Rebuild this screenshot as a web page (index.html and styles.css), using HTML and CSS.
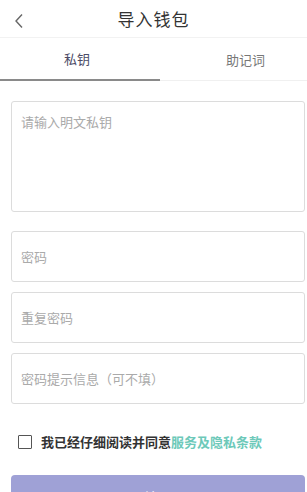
FILE: index.html
```html
<!DOCTYPE html>
<html>
<head>
    <title>导入钱包</title>
<link rel="stylesheet" href="styles.css">
</head>
<body>
    <div class="header">
        <span class="back">
            <svg width="10" height="16" viewBox="0 0 10 16"><path d="M8 1.5 L2 8 L8 14.5" fill="none" stroke="#666" stroke-width="1.4"/></svg>
        </span>
        <h1>导入钱包</h1>
    </div>

    <div class="tabs">
        <div class="tab active">私钥</div>
        <div class="tab">助记词</div>
    </div>

    <form class="import-form">
        <textarea class="field key" placeholder="请输入明文私钥"></textarea>
        <input class="field" type="password" placeholder="密码">
        <input class="field" type="password" placeholder="重复密码">
        <input class="field" type="text" placeholder="密码提示信息（可不填）">

        <label class="agree">
            <span class="box"></span>
            <span>我已经仔细阅读并同意<a class="terms">服务及隐私条款</a></span>
        </label>

        <button type="submit" class="start">开始导入</button>
    </form>
</body>
</html>
```

FILE: styles.css
```css
/* Global Styles */
body {
    font-family: "Noto Sans CJK SC", "Noto Sans", sans-serif;
    background-color: #fff;
    margin: 0;
    padding: 0;
    overflow: hidden;
}

.header {
    height: 37px;
    display: flex;
    align-items: center;
    justify-content: center;
    position: relative;
    border-bottom: 1px solid #f2f2f2;
}

.back {
    position: absolute;
    left: 14px;
    top: 10px;
}

h1 {
    margin: 0;
    font-size: 17px;
    font-weight: normal;
    color: #333;
    letter-spacing: 1px;
}

.tabs {
    display: flex;
    height: 42px;
    border-bottom: 1px solid #f0f0f0;
}

.tab {
    flex: 1;
    display: flex;
    align-items: center;
    justify-content: center;
    font-size: 13px;
    color: #777;
}

.tab.active {
    flex: 0 0 160px;
    padding-right: 6px;
    box-sizing: border-box;
    color: #4c4c66;
    border-bottom: 2px solid #8a8a8a;
    margin-bottom: -1px;
}

.tab:last-child {
    padding-left: 24px;
}

.import-form {
    padding: 20px 2px 0 11px;
    display: flex;
    flex-direction: column;
}

.field {
    box-sizing: border-box;
    border: 1px solid #dcdcdc;
    border-radius: 3px;
    font-family: inherit;
    font-size: 13px;
    color: #333;
    padding: 0 9px;
    margin: 0 0 10px 0;
    outline: none;
}

.field::placeholder {
    color: #aaa;
}

.key {
    height: 111px;
    padding-top: 10px;
    resize: none;
    margin-bottom: 19px;
}

input.field {
    height: 51px;
}

.agree {
    display: flex;
    align-items: center;
    gap: 9px;
    margin: 18px 0 0 7px;
    font-size: 13px;
    font-weight: bold;
    color: #333;
}

.box {
    width: 12px;
    height: 12px;
    border: 1.5px solid #555;
    border-radius: 1px;
}

.terms {
    color: #6dc9b9;
}

.start {
    margin-top: 24px;
    height: 44px;
    border: none;
    border-radius: 4px;
    background-color: #9fa1d6;
    color: #fff;
    font-family: inherit;
    font-size: 14px;
}
```
